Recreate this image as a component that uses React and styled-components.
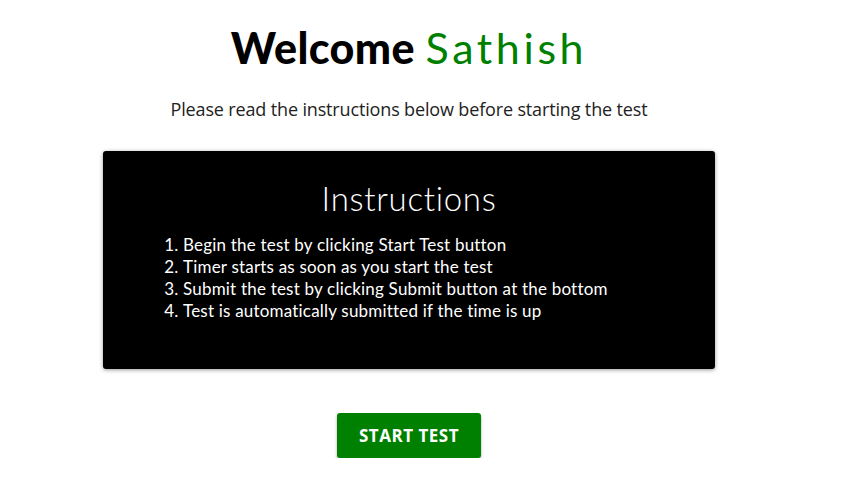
import React from "react";
import styled, { createGlobalStyle } from "styled-components";

const Global = createGlobalStyle`
  html, body { margin: 0; padding: 0; background: #fff; }
  body { font-family: "Lato", "Open Sans", sans-serif; }
`;

const Page = styled.main`
  width: 818px;
  display: flex;
  flex-direction: column;
  align-items: center;
  padding-top: 22px;
`;

const Title = styled.h1`
  margin: 0;
  font-family: "Lato", sans-serif;
  font-size: 43px;
  font-weight: 900;
  color: #000;
  line-height: 52px;
  letter-spacing: 0.4px;
`;

const Name = styled.span`
  color: #008000;
  font-weight: 400;
  letter-spacing: 3.6px;
`;

const Subtitle = styled.p`
  margin: 23px 0 0;
  font-family: "Open Sans", sans-serif;
  font-size: 18px;
  color: #222;
  line-height: 24px;
  letter-spacing: -0.15px;
`;

const Card = styled.section`
  margin-top: 30px;
  width: 612px;
  height: 218px;
  box-sizing: border-box;
  background: #000;
  border-radius: 3px;
  box-shadow: 0 1px 4px rgba(0, 0, 0, 0.4);
  color: #fff;
  padding-top: 25px;
`;

const CardTitle = styled.h2`
  margin: 0;
  text-align: center;
  font-family: "Lato", sans-serif;
  font-weight: 300;
  font-size: 33px;
  line-height: 44px;
  letter-spacing: 0.7px;
`;

const List = styled.ol`
  margin: 14px 0 0;
  padding-left: 80px;
  font-family: "Lato", sans-serif;
  font-size: 17px;
  line-height: 22px;
  letter-spacing: 0.2px;
`;

const Item = styled.li`
  padding-left: 0;
`;

const Button = styled.button`
  margin-top: 44px;
  width: 144px;
  height: 45px;
  border: none;
  border-radius: 3px;
  background: #008000;
  color: #fff;
  font-family: "Open Sans", sans-serif;
  font-weight: 700;
  font-size: 17px;
  letter-spacing: 0.5px;
  box-shadow: 0 2px 3px rgba(0, 0, 0, 0.35);
  cursor: pointer;
`;

const items = [
  "Begin the test by clicking Start Test button",
  "Timer starts as soon as you start the test",
  "Submit the test by clicking Submit button at the bottom",
  "Test is automatically submitted if the time is up",
];

export default function App() {
  return (
    <>
      <Global />
      <Page>
        <Title>
          Welcome <Name>Sathish</Name>
        </Title>
        <Subtitle>Please read the instructions below before starting the test</Subtitle>
        <Card>
          <CardTitle>Instructions</CardTitle>
          <List>
            {items.map((t) => (
              <Item key={t}>{t}</Item>
            ))}
          </List>
        </Card>
        <Button>START TEST</Button>
      </Page>
    </>
  );
}
